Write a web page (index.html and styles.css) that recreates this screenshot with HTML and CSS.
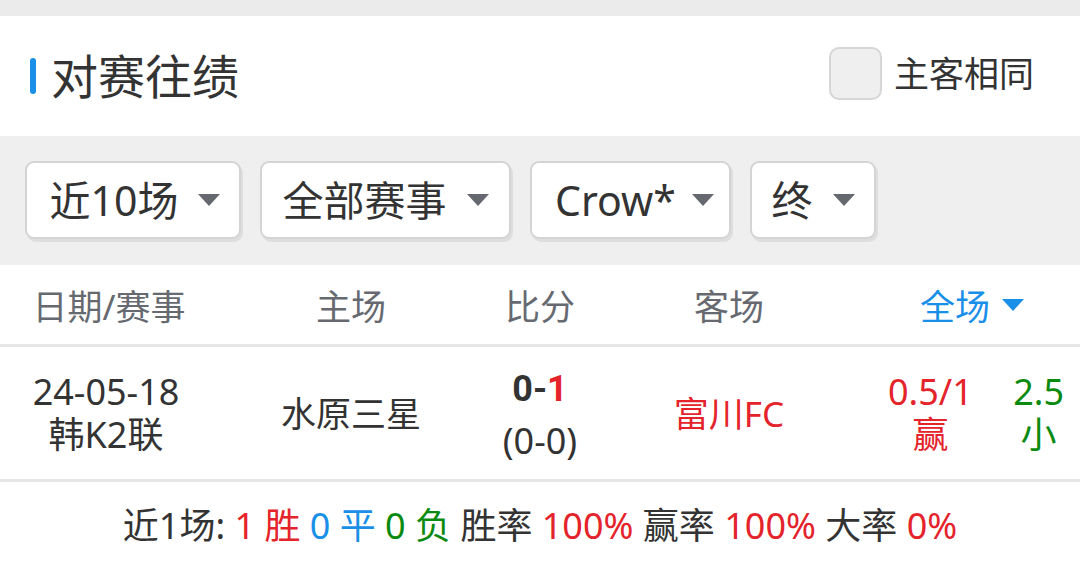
FILE: index.html
```html
<!DOCTYPE html>
<html lang="zh">
<head>
<meta charset="utf-8">
<link rel="stylesheet" href="styles.css">
</head>
<body>
<div class="topbar"></div>
<div class="head">
  <div class="title"><span class="bar"></span><span class="title-text">对赛往绩</span></div>
  <label class="same"><span class="check"></span><span class="same-text">主客相同</span></label>
</div>
<div class="filters">
  <div class="sel sel1"><span>近10场</span><i class="tri"></i></div>
  <div class="sel sel2"><span>全部赛事</span><i class="tri"></i></div>
  <div class="sel sel3"><span>Crow*</span><i class="tri"></i></div>
  <div class="sel sel4"><span>终</span><i class="tri"></i></div>
</div>
<div class="thead">
  <div class="c1">日期/赛事</div>
  <div class="c2">主场</div>
  <div class="c3">比分</div>
  <div class="c4">客场</div>
  <div class="c5 blue">全场<i class="tri tri-blue"></i></div>
</div>
<div class="row">
  <div class="c1 stack"><span>24-05-18</span><span>韩K2联</span></div>
  <div class="c2">水原三星</div>
  <div class="c3 stack score"><span class="ft"><b>0-</b><b class="red">1</b></span><span class="ht">(0-0)</span></div>
  <div class="c4 red">富川FC</div>
  <div class="c5 odds">
    <div class="stack red"><span>0.5/1</span><span>赢</span></div>
    <div class="stack green"><span>2.5</span><span>小</span></div>
  </div>
</div>
<div class="summary">
  <p class="summary-line">近1场: <span class="red">1 胜</span> <span class="blue">0 平</span> <span class="green">0 负</span> 胜率 <span class="red">100%</span> 赢率 <span class="red">100%</span> 大率 <span class="red">0%</span></p>
</div>
</body>
</html>
```

FILE: styles.css
```css
* { box-sizing: border-box; }
html, body { margin: 0; padding: 0; }
body {
  width: 1080px;
  height: 562px;
  overflow: hidden;
  background: #fff;
  font-family: "Noto Sans", "Noto Sans CJK SC", sans-serif;
  color: #333;
}
.topbar { height: 16px; background: #ebebeb; }
.head {
  height: 120px;
  display: flex;
  align-items: center;
  justify-content: space-between;
  padding: 0 46px 0 30px;
}
.title { display: flex; align-items: center; }
.bar { width: 6px; height: 36px; border-radius: 3px; background: #1a8fe8; }
.title-text { font-size: 47px; margin-left: 15px; line-height: 1; color: #333; }
.same { display: flex; align-items: center; margin-top: -6px; }
.check {
  width: 53px; height: 53px;
  border: 2px solid #d6d6d6;
  border-radius: 10px;
  background: #efefef;
}
.same-text { font-size: 35px; margin-left: 12px; line-height: 1; color: #333; }

.filters {
  height: 129px;
  background: #efefef;
  display: flex;
  align-items: center;
  gap: 19px;
  padding: 0 0 0 25px;
}
.sel {
  height: 78px;
  background: #fff;
  border: 2px solid #d4d4d4;
  border-radius: 9px;
  box-shadow: 2px 3px 0 #dedede;
  display: flex;
  align-items: center;
  justify-content: center;
  font-size: 41px;
  color: #333;
  margin-top: -1px;
}
.sel span { line-height: 1; }
.sel1 { width: 216px; }
.sel2 { width: 251px; }
.sel3 { width: 201px; }
.sel4 { width: 126px; }
.sel1 span { margin-left: 4px; }
.sel3 span { margin-left: 8px; }
.sel3 .tri { margin-left: 16px; }
.tri {
  display: inline-block;
  width: 0; height: 0;
  border-left: 11.5px solid transparent;
  border-right: 11.5px solid transparent;
  border-top: 12px solid #666870;
  margin-left: 20px;
}
.tri-blue { border-top-color: #1a8fe8; margin-left: 12px; }

.thead, .row { display: flex; }
.thead {
  height: 82px;
  border-bottom: 3px solid #e6e6e6;
  align-items: center;
  font-size: 35px;
  color: #666a70;
}
.c1 { width: 216px; }
.c2 { width: 270px; }
.c3 { width: 108px; }
.c4 { width: 270px; }
.c5 { width: 216px; }
.thead > div, .row > div {
  display: flex;
  align-items: center;
  justify-content: center;
  text-align: center;
}
.thead > .c1 { padding-left: 2px; }
.row {
  height: 135px;
  border-bottom: 3px solid #e6e6e6;
  font-size: 36px;
  color: #333;
}
.row > .stack { flex-direction: column; }
.row > .c1 { padding-right: 4px; }
.row > .c2 { font-size: 35px; padding-bottom: 4px; }
.row > .c4 { font-size: 35px; padding-bottom: 4px; }
.stack { display: flex; flex-direction: column; align-items: center; line-height: 43px; }
.score .ft { font-family: Roboto, "Noto Sans", sans-serif; font-weight: 700; font-size: 36px; }
.score .ft b { font-weight: 700; }
.score .ht { margin-top: 8px; }
.score { padding-top: 4px; }
.row > .c5.odds { justify-content: space-between; padding: 0 16px 0 24px; }
.odds .stack { line-height: 43px; }

.red { color: #e4232b; }
.blue { color: #1a8fe8; }
.green { color: #0b8a10; }

.summary {
  height: 80px;
  display: flex;
  align-items: center;
  justify-content: center;
  padding-top: 8px;
}
.summary-line {
  margin: 0;
  font-size: 36px;
  line-height: 1.2;
  color: #333;
  white-space: nowrap;
}
```
